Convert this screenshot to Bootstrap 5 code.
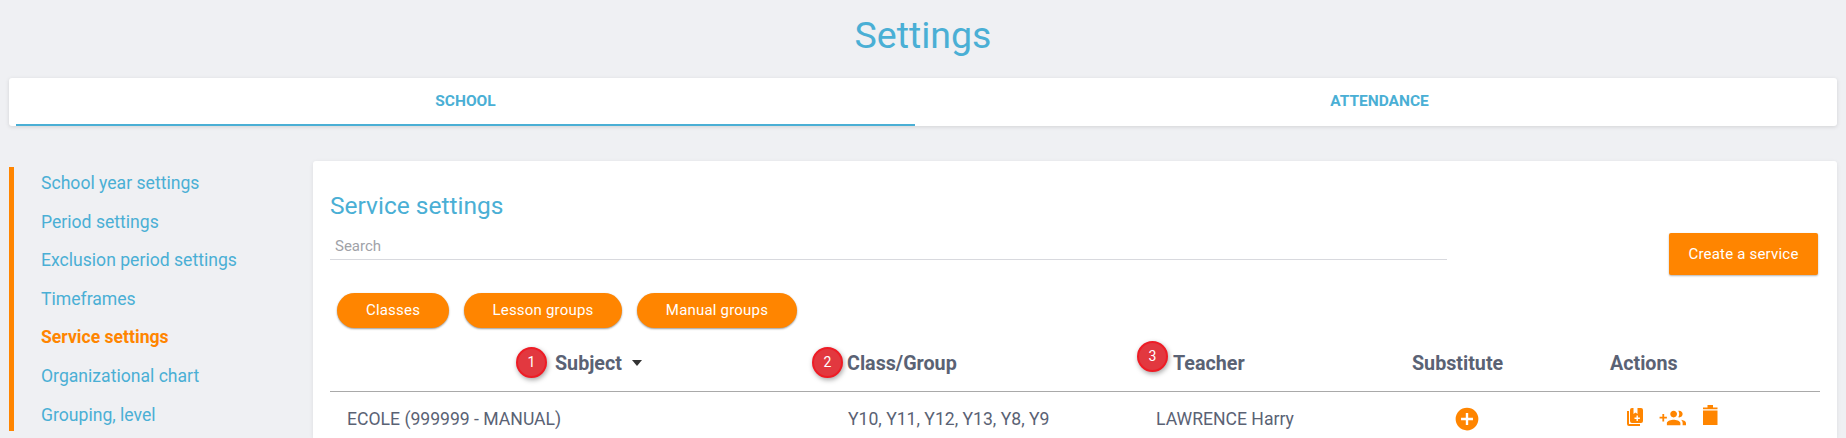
<!DOCTYPE html>
<html lang="en">
<head>
<meta charset="utf-8">
<title>Settings</title>
<link href="https://cdn.jsdelivr.net/npm/bootstrap@5.3.0/dist/css/bootstrap.min.css" rel="stylesheet">
<style>
html,body{height:438px;overflow:hidden}
body{background:#eff0f3;font-family:Roboto,"Liberation Sans",sans-serif;color:#5a6274}
.page-wrap{padding:0 9px 0 9px}
.page-title{height:78px;margin:0;padding-top:13px;text-align:center;color:#4aafd5;font-size:37.5px;font-weight:400;line-height:44px}
.tabs-card{height:48px;border:0;border-radius:3px;background:#fff;box-shadow:0 1px 4px rgba(0,0,0,.12);padding:0 0 0 7px}
.tab-item{height:48px;line-height:46px;text-align:center;color:#4aafd5;font-size:15.5px;font-weight:700;text-decoration:none;text-transform:uppercase;border-bottom:2px solid transparent}
.tab-one{width:899px;flex:none;border-bottom-color:#4aafd5}
.tab-two{padding-left:7px}
.main-row{margin-top:35px}
.side-col{width:304px;flex:none;padding-top:6px}
.side-nav{border-left:5px solid #ff8500;height:264px;padding-left:27px;padding-top:1px;display:flex;flex-direction:column}
.side-link{display:block;flex:none;height:38.6px;line-height:30px;color:#4aafd5;font-size:17.6px;text-decoration:none;white-space:nowrap}
.side-link.is-on{color:#ff8500;font-weight:700}
.panel-card{flex:1;border:0;border-radius:3px 3px 0 0;background:#fff;box-shadow:0 1px 4px rgba(0,0,0,.08);padding:30px 16px 0 17px;height:277px}
.panel-title{color:#4aafd5;font-size:24.5px;font-weight:400;line-height:30px;margin:0}
.search-row{height:72px}
.search-box{width:1117px;height:28px;margin-top:11px;border:0;border-bottom:1px solid #d8d9de;border-radius:0;padding:0 5px;font-size:15px;line-height:26px;background:transparent;outline:0;color:#5a6274}
.search-box::placeholder{color:#a0a2a8;opacity:1}
.create-btn{width:149px;height:42px;margin-right:3px;margin-top:12px;padding:0;background:#ff8500;border:0;border-radius:2px;color:#fff;font-size:15px;letter-spacing:.2px;box-shadow:0 1px 2px rgba(0,0,0,.3)}
.pill-row{padding-left:7px;gap:15px}
.pill-btn{height:35px;padding:0;background:#ff8500;border:0;border-radius:18px;color:#fff;font-size:15px;letter-spacing:.2px;box-shadow:0 1px 2px rgba(0,0,0,.4)}
.pill-a{width:112px}.pill-b{width:158px}.pill-c{width:160px}
.svc-table{table-layout:fixed;width:1490px;margin:16px 0 0;color:#5a6274}
.svc-table th{height:47px;padding:0 0 7px;vertical-align:middle;font-size:19.7px;font-weight:700;color:#5a6274;border-bottom:1px solid #a9a9a9;white-space:nowrap;position:relative;background:transparent}
.svc-table td{padding:10px 0 0;height:46px;vertical-align:middle;font-size:17.6px;color:#5a6274;border:0;white-space:nowrap;background:transparent}
.w-a{width:501px}.w-b{width:308px}.w-c{width:246px}.w-d{width:207px}
.pl-a{padding-left:225px!important}.pl-b{padding-left:16px!important}.pl-c{padding-left:34px!important}.pl-d{padding-left:27px!important}.pl-e{padding-left:18px!important}
.td-a{padding-left:17px!important}.td-b{padding-left:17px!important}.td-d{padding-left:69px!important}.td-e{padding-left:35px!important}
.sort-caret{display:inline-block;width:0;height:0;margin-left:10px;vertical-align:4px;border-left:5px solid transparent;border-right:5px solid transparent;border-top:6px solid #333}
.step-dot{position:absolute;width:31px;height:31px;border-radius:50%;background:#e2383f;border:2px solid #ee1c25;color:#fff;font-size:14px;font-weight:400;line-height:27px;text-align:center;box-shadow:1px 2px 5px rgba(0,0,0,.35)}
.dot-a{left:186px;top:3px}.dot-b{left:-19px;top:3px}.dot-c{left:-2px;top:-3px}
.ico{fill:#ff8500;display:block}
.ico-row{display:flex;align-items:flex-start}
.ico-gap-a{margin-left:16px;margin-top:-1px}
.ico-gap-b{margin-left:17px;margin-top:-1px}
.ico-book{margin-top:2px}
</style>
</head>
<body>
<div class="page-wrap">
  <h1 class="page-title">Settings</h1>
  <div class="card tabs-card d-flex flex-row">
    <a href="#" class="tab-item tab-one">School</a>
    <a href="#" class="tab-item tab-two flex-fill">Attendance</a>
  </div>
  <div class="d-flex main-row">
    <div class="side-col">
      <nav class="side-nav">
        <a href="#" class="side-link">School year settings</a>
        <a href="#" class="side-link">Period settings</a>
        <a href="#" class="side-link">Exclusion period settings</a>
        <a href="#" class="side-link">Timeframes</a>
        <a href="#" class="side-link is-on">Service settings</a>
        <a href="#" class="side-link">Organizational chart</a>
        <a href="#" class="side-link">Grouping, level</a>
      </nav>
    </div>
    <div class="card panel-card">
      <h2 class="panel-title">Service settings</h2>
      <div class="d-flex justify-content-between align-items-start search-row">
        <input class="search-box" type="text" placeholder="Search">
        <button class="btn create-btn" type="button">Create a service</button>
      </div>
      <div class="d-flex pill-row">
        <button class="btn pill-btn pill-a" type="button">Classes</button>
        <button class="btn pill-btn pill-b" type="button">Lesson groups</button>
        <button class="btn pill-btn pill-c" type="button">Manual groups</button>
      </div>
      <table class="table svc-table">
        <thead>
          <tr>
            <th class="w-a pl-a"><span class="step-dot dot-a">1</span>Subject<span class="sort-caret"></span></th>
            <th class="w-b pl-b"><span class="step-dot dot-b">2</span>Class/Group</th>
            <th class="w-c pl-c"><span class="step-dot dot-c">3</span>Teacher</th>
            <th class="w-d pl-d">Substitute</th>
            <th class="pl-e">Actions</th>
          </tr>
        </thead>
        <tbody>
          <tr>
            <td class="td-a">ECOLE (999999 - MANUAL)</td>
            <td class="td-b">Y10, Y11, Y12, Y13, Y8, Y9</td>
            <td class="td-b">LAWRENCE Harry</td>
            <td class="td-d">
              <svg class="ico" width="26" height="26" viewBox="0 0 24 24"><path d="M12 1.500a10.500 10.500 0 1 0 0 21 10.500 10.500 0 0 0 0-21zm5.500 11.600h-4.400v4.400h-2.200v-4.400H6.500v-2.200h4.400V6.500h2.200v4.400h4.400v2.200z"/></svg>
            </td>
            <td class="td-e">
              <div class="ico-row">
                <svg class="ico ico-book" width="16" height="18" viewBox="0 0 16 18"><path d="M0 3h2v13h11v2H2a2 2 0 0 1-2-2V3z"/><path d="M5 0h1.500v6l2-1.500 2 1.500V0H14a2 2 0 0 1 2 2v11a2 2 0 0 1-2 2H5a2 2 0 0 1-2-2V2a2 2 0 0 1 2-2zm4.500 7.500v2H7.500v1.400h2v2h1.400v-2h2V9.500h-2v-2z" fill-rule="evenodd"/></svg>
                <svg class="ico ico-gap-a" width="27" height="27" viewBox="0 0 24 24"><path d="M7 10.500H4.600V8H3v2.500H.5v1.600H3v2.500h1.600v-2.500H7v-1.600zm11 .5c1.660 0 3-1.340 3-3s-1.340-3-3-3c-.32 0-.63.05-.91.14.57.81.9 1.790.9 2.860s-.34 2.040-.9 2.860c.28.09.59.14.91.14zm-5 0c1.660 0 3-1.340 3-3s-1.340-3-3-3-3 1.340-3 3 1.340 3 3 3zm6.620 2.160c.83.73 1.380 1.660 1.380 2.840v2h3v-2c0-1.540-2.370-2.490-4.380-2.840zM13 13c-2 0-6 1-6 3v2h12v-2c0-2-4-3-6-3z"/></svg>
                <svg class="ico ico-gap-b" width="15" height="20" viewBox="0 0 15 20"><path d="M0 5.500h14.500V20H0zM0 2.500h4.500V0h5.500v2.500h4.500v1.800H0z"/></svg>
              </div>
            </td>
          </tr>
        </tbody>
      </table>
    </div>
  </div>
</div>
</body>
</html>
